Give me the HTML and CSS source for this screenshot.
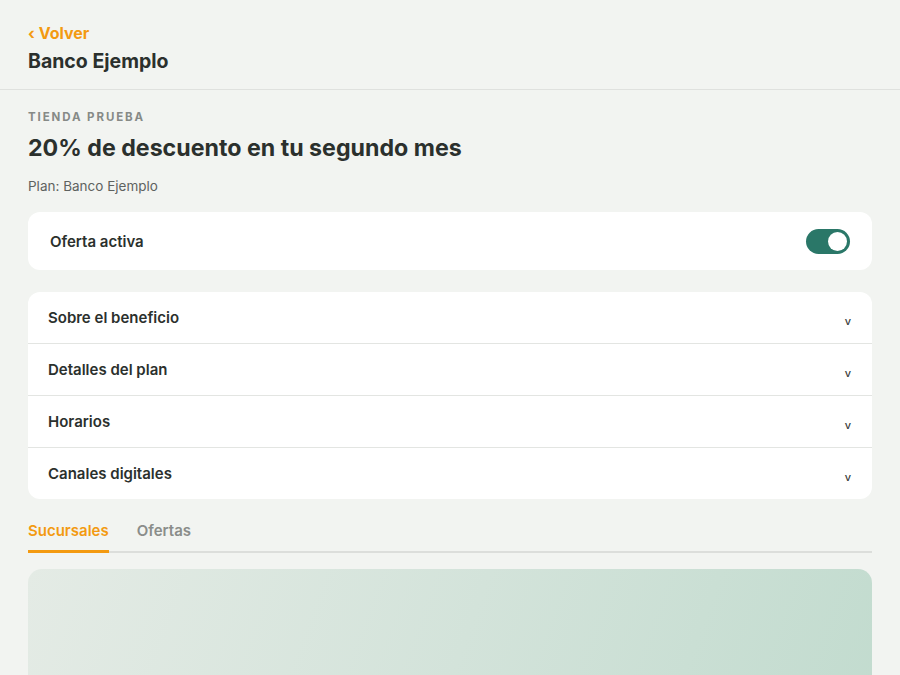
FILE: index.html
```html
<!doctype html>
<html lang="es">
  <head>
    <meta charset="UTF-8" />
    <meta name="viewport" content="width=device-width, initial-scale=1.0" />
    <title>Banco Ejemplo</title>
    <link rel="stylesheet" href="styles.css">
  </head>
  <body>
    <header class="header">
      <a class="back" href="#">&lsaquo; Volver</a>
      <h1>Banco Ejemplo</h1>
    </header>

    <main class="content">
      <div class="store">Tienda prueba</div>
      <h2 class="title">20% de descuento en tu segundo mes</h2>
      <div class="plan">Plan: Banco Ejemplo</div>

      <div class="card toggle-row">
        <span>Oferta activa</span>
        <span class="switch"><span class="knob"></span></span>
      </div>

      <div class="card accordion">
        <div class="acc-row"><span>Sobre el beneficio</span><span class="chev">v</span></div>
        <div class="acc-row"><span>Detalles del plan</span><span class="chev">v</span></div>
        <div class="acc-row"><span>Horarios</span><span class="chev">v</span></div>
        <div class="acc-row"><span>Canales digitales</span><span class="chev">v</span></div>
      </div>

      <div class="tabs">
        <span class="tab active">Sucursales</span>
        <span class="tab">Ofertas</span>
      </div>

      <div class="map"></div>
    </main>
  </body>
</html>
```

FILE: styles.css
```css
body {
  margin: 0;
  font-family: Inter, "Noto Sans", sans-serif;
  background-color: #f2f4f1;
  color: #2b302d;
}

.header {
  padding: 23px 28px 17px;
  border-bottom: 1px solid #dfe1de;
}

.back {
  display: block;
  color: #f39a11;
  font-size: 16px;
  font-weight: 700;
  text-decoration: none;
  line-height: 20px;
}

.header h1 {
  margin: 7px 0 0;
  font-size: 19.5px;
  font-weight: 700;
  line-height: 22px;
}

.content {
  padding: 0 28px;
}

.store {
  margin-top: 20px;
  font-size: 11.5px;
  font-weight: 700;
  letter-spacing: 1.9px;
  text-transform: uppercase;
  color: #868a87;
  line-height: 14px;
}

.title {
  margin: 9px 0 0;
  font-size: 23.2px;
  font-weight: 700;
  line-height: 30px;
}

.plan {
  margin-top: 15px;
  font-size: 13.5px;
  color: #5e625f;
  line-height: 16px;
}

.card {
  background-color: #fff;
  border-radius: 12px;
}

.toggle-row {
  margin-top: 18px;
  height: 58px;
  padding: 0 22px;
  display: flex;
  align-items: center;
  justify-content: space-between;
  font-size: 15px;
  font-weight: 600;
}

.switch {
  width: 44px;
  height: 25px;
  border-radius: 13px;
  background-color: #2a7768;
  display: flex;
  align-items: center;
  justify-content: flex-end;
  padding: 0 3px;
  box-sizing: border-box;
}

.knob {
  width: 19px;
  height: 19px;
  border-radius: 50%;
  background-color: #fff;
}

.accordion {
  margin-top: 22px;
}

.acc-row {
  height: 51px;
  padding: 0 20px;
  display: flex;
  align-items: center;
  justify-content: space-between;
  font-size: 15px;
  font-weight: 600;
  border-bottom: 1px solid #e3e5e2;
}

.acc-row:last-child {
  border-bottom: none;
}

.chev {
  font-size: 11px;
  font-weight: 500;
  color: #3a3d3b;
  margin-top: 6px;
  margin-right: 1px;
}

.tabs {
  margin-top: 20px;
  display: flex;
  gap: 28px;
  border-bottom: 2px solid #dcdedb;
}

.tab {
  padding: 2px 0 10px;
  font-size: 15px;
  font-weight: 600;
  color: #8a8d8a;
  margin-bottom: -2px;
  border-bottom: 3px solid transparent;
}

.tab.active {
  color: #f39a11;
  border-bottom-color: #f39a11;
}

.map {
  margin-top: 16px;
  height: 220px;
  border-radius: 14px;
  background: linear-gradient(110deg, #e4ebe5 0%, #d3e3da 50%, #c1dbce 100%);
}
```
